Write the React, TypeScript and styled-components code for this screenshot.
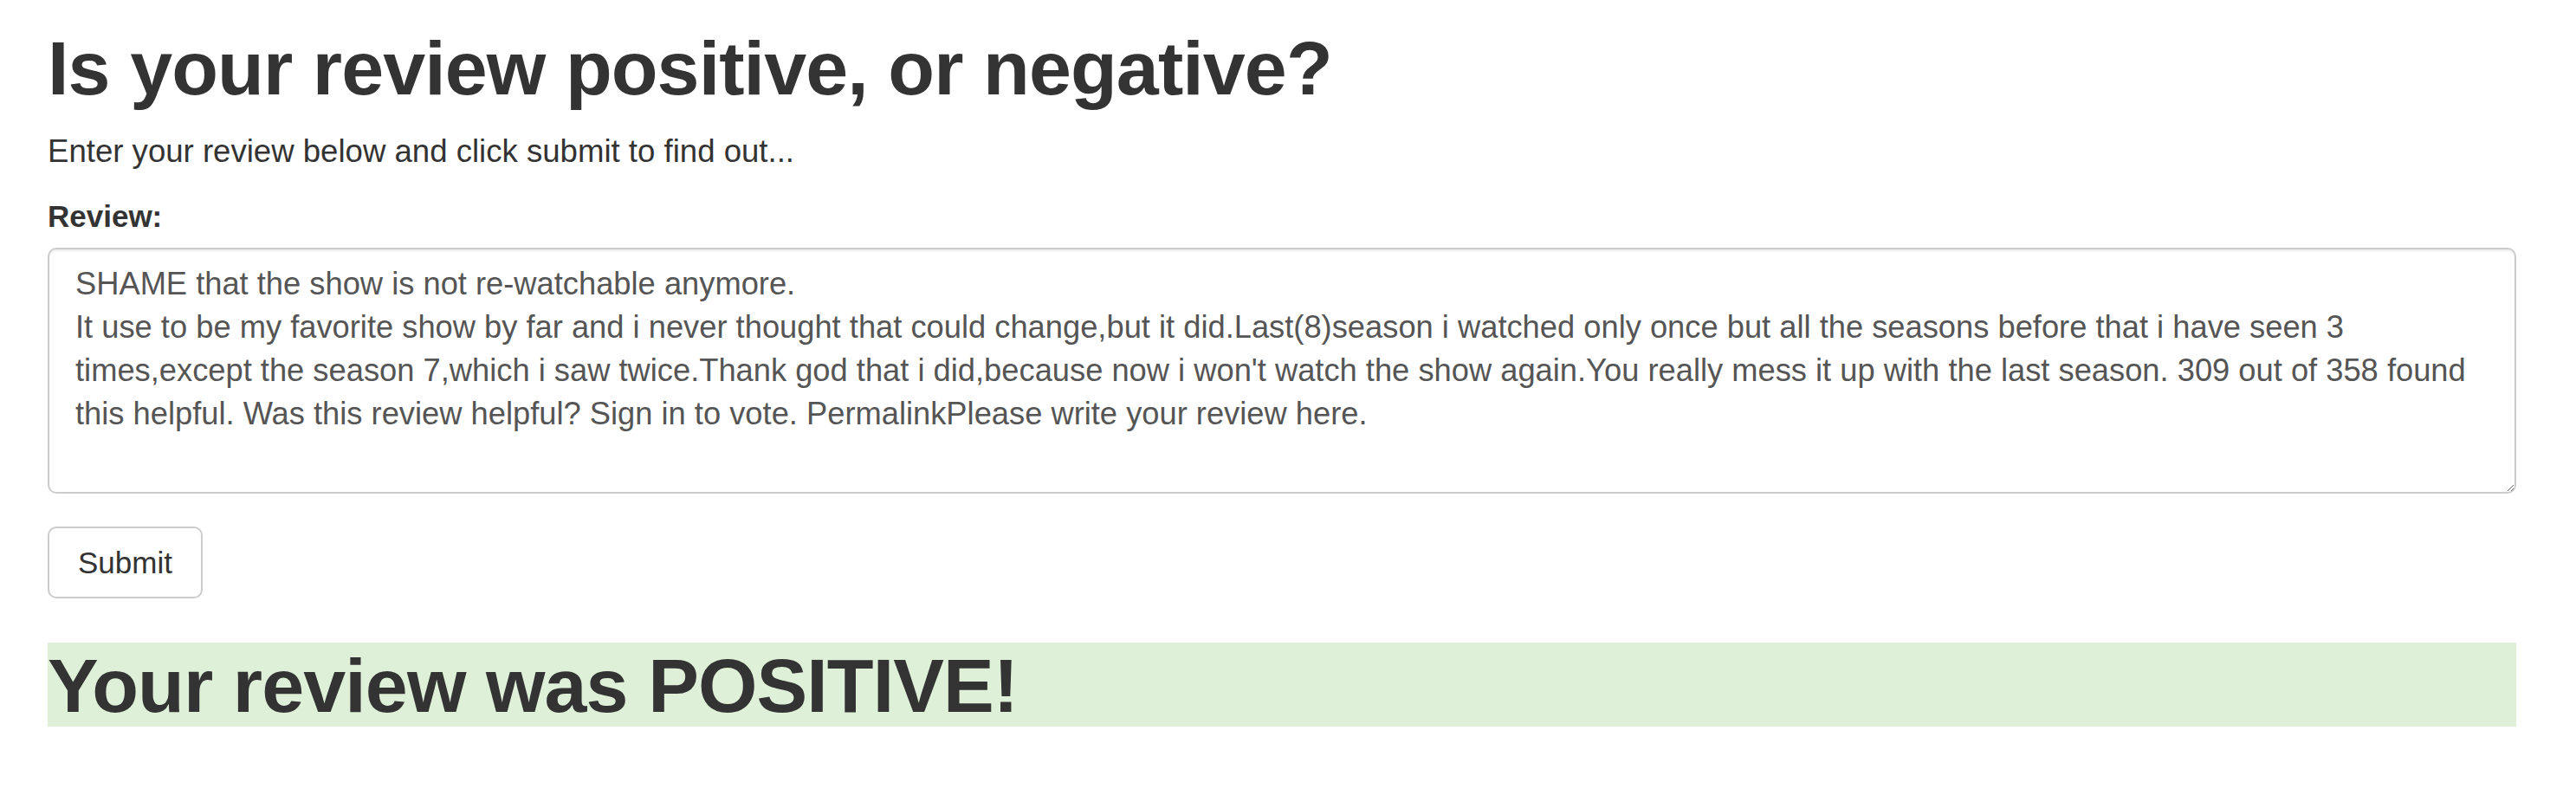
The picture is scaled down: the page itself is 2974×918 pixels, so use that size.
import styled, { createGlobalStyle } from 'styled-components';

const GlobalStyle = createGlobalStyle`
  html, body {
    margin: 0;
    padding: 0;
    background: #fff;
  }
  body {
    font-family: "Liberation Sans", Arial, Helvetica, sans-serif;
    font-size: 35px;
    line-height: 50px;
    color: #333;
  }
  * {
    box-sizing: border-box;
  }
`

const Page = styled.div`
  padding: 30px 69px 60px 55px;
`

const Title = styled.h1`
  margin: 0 0 23px 0;
  font-size: 88px;
  line-height: 97px;
  font-weight: 700;
  letter-spacing: -0.9px;
  color: #333;
`

const Intro = styled.p`
  margin: 0 0 25px 0;
  font-size: 36.6px;
`

const FormGroup = styled.div`
  display: flex;
  flex-direction: column;
  margin-bottom: 38px;
`

const Label = styled.label`
  font-weight: 700;
  margin-bottom: 11px;
`

const ReviewBox = styled.textarea`
  width: 100%;
  height: 284px;
  padding: 15px 30px;
  border: 2px solid #ccc;
  border-radius: 10px;
  box-shadow: inset 0 2px 2px rgba(0, 0, 0, 0.075);
  font-family: inherit;
  font-size: 36.3px;
  line-height: 50px;
  color: #555;
  background: #fff;
  resize: vertical;
  outline: none;
`

const Button = styled.button`
  display: inline-block;
  height: 83px;
  padding: 0 33px;
  border: 2px solid #ccc;
  border-radius: 10px;
  background: #fff;
  color: #333;
  font-family: inherit;
  font-size: 35px;
  line-height: 50px;
  cursor: pointer;
`

const Result = styled.h1<{ $positive: boolean }>`
  margin: 51px 0 0 0;
  padding-top: 3px;
  height: 97px;
  font-size: 88px;
  line-height: 94px;
  font-weight: 700;
  letter-spacing: -0.9px;
  color: #333;
  background-color: ${p => (p.$positive ? '#dff0d8' : '#f2dede')};
`

// line breaks kept where the original form wrapped them
const review =
  "SHAME that the show is not re-watchable anymore.\n" +
  "It use to be my favorite show by far and i never thought that could change,but it did.Last(8)season i watched only once but all the seasons before that i have seen 3\n" +
  "times,except the season 7,which i saw twice.Thank god that i did,because now i won't watch the show again.You really mess it up with the last season. 309 out of 358 found\n" +
  "this helpful. Was this review helpful? Sign in to vote. PermalinkPlease write your review here."

const App = () => {
  const positive = true;

  return (
    <Page>
      <GlobalStyle />
      <Title>Is your review positive, or negative?</Title>
      <Intro>Enter your review below and click submit to find out...</Intro>
      <form onSubmit={e => e.preventDefault()}>
        <FormGroup>
          <Label htmlFor="review">Review:</Label>
          <ReviewBox id="review" defaultValue={review} spellCheck={false} />
        </FormGroup>
        <Button type="submit">Submit</Button>
      </form>
      <Result $positive={positive}>
        Your review was {positive ? 'POSITIVE' : 'NEGATIVE'}!
      </Result>
    </Page>
  );
};

export default App;
